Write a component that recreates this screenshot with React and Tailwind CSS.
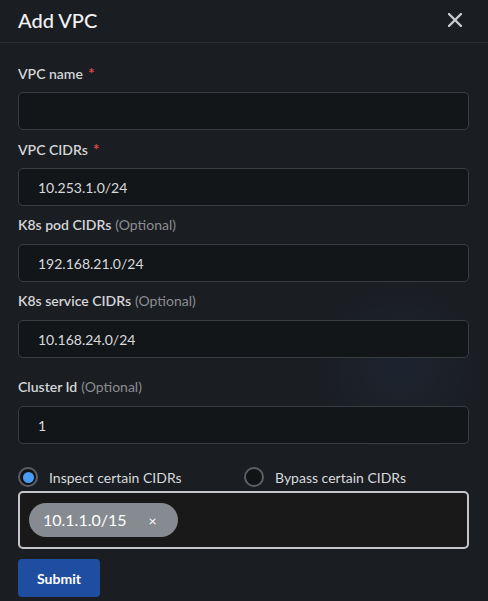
import React, { useState } from 'react';

const Label = ({ text, required, optional }) => (
  <div className="h-5 leading-5 text-[14px] font-semibold text-[#d3d5d8] mb-[9px]">
    {text}
    {required && <span className="ml-[5px] text-[16px] text-[#e5484d]">*</span>}
    {optional && <span className="ml-1 font-normal text-[#8a8e93]">(Optional)</span>}
  </div>
);

const Field = ({ label, required, optional, value, className = '' }) => (
  <div className={className}>
    <Label text={label} required={required} optional={optional} />
    <input
      type="text"
      defaultValue={value}
      className="w-full h-[38px] rounded-[5px] border border-[#3a3d41] bg-[#131619] px-[19px] text-[14px] text-[#d8dadd] outline-none"
    />
  </div>
);

const Radio = ({ checked, label, onClick, className = '' }) => (
  <button type="button" onClick={onClick} className={`flex h-5 items-center gap-[11px] whitespace-nowrap ${className}`}>
    <span className="flex h-5 w-5 shrink-0 items-center justify-center rounded-full border-2 border-[#5c6066] bg-[#111315]">
      {checked && <span className="h-[11px] w-[11px] rounded-full bg-[#4a9bf5]" />}
    </span>
    <span className="text-[14px] text-[#d8dadd]">{label}</span>
  </button>
);

const App = () => {
  const [mode, setMode] = useState('inspect');

  return (
    <div
      className="min-h-[601px] w-full bg-[#1a1d21] bg-[radial-gradient(circle_at_82%_61%,rgba(40,60,100,0.22),transparent_90px)] text-white"
      style={{ fontFamily: 'Lato, "Open Sans", sans-serif' }}
    >
      <div className="flex h-[43px] items-center justify-between border-b border-[#2b2e33] pl-[18px] pr-[26px] pb-[3px]">
        <h1 className="text-[20px] font-medium text-[#f1f2f3]">Add VPC</h1>
        <svg width="14" height="14" viewBox="0 0 14 14" className="text-[#c9cbce]">
          <path d="M1 1 L13 13 M13 1 L1 13" stroke="currentColor" strokeWidth="2.4" strokeLinecap="round" />
        </svg>
      </div>

      <div className="px-[18px] pt-5 pr-[19px]">
        <div className="flex flex-col gap-[9px]">
          <Field label="VPC name" required value="" />
          <Field label="VPC CIDRs" required value="10.253.1.0/24" />
          <Field label="K8s pod CIDRs" optional value="192.168.21.0/24" />
          <Field label="K8s service CIDRs" optional value="10.168.24.0/24" />
          <Field label="Cluster Id" optional value="1" className="mt-[10px]" />
        </div>

        <div className="mt-[23px] flex">
          <Radio className="w-[226px]" checked={mode === 'inspect'} label="Inspect certain CIDRs" onClick={() => setMode('inspect')} />
          <Radio checked={mode === 'bypass'} label="Bypass certain CIDRs" onClick={() => setMode('bypass')} />
        </div>

        <div className="mt-1 flex h-[58px] items-center rounded-[5px] border-2 border-[#c4c6c8] bg-[#19191a] px-[9px]">
          <span className="flex h-[34px] items-center gap-[22px] rounded-full bg-[#858b91] pl-[14px] pr-[21px] text-[16px] text-white">
            10.1.1.0/15
            <span className="text-[14px]">×</span>
          </span>
        </div>

        <button
          type="submit"
          className="mt-[10px] h-[38px] w-[82px] rounded-[4px] bg-[#1f4ea1] text-[14px] font-bold text-white"
        >
          Submit
        </button>
      </div>
    </div>
  );
};

export default App;
